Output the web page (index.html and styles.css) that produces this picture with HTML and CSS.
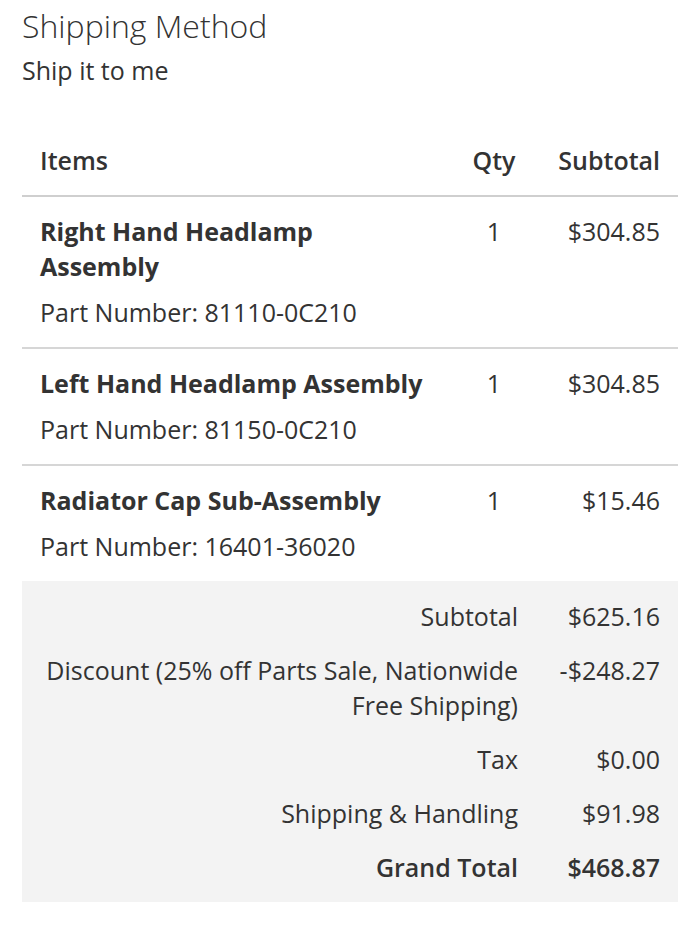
FILE: index.html
```html
<!DOCTYPE html>
<html lang="en">
<head>
<meta charset="utf-8">
<title>Shipping Method</title>
<link rel="stylesheet" href="styles.css">
</head>
<body>
<div class="page">
  <h2 class="title">Shipping Method</h2>
  <p class="method">Ship it to me</p>

  <table class="items">
    <thead>
      <tr>
        <th class="col-item">Items</th>
        <th class="col-qty">Qty</th>
        <th class="col-sub">Subtotal</th>
      </tr>
    </thead>
    <tbody>
      <tr>
        <td class="col-item">
          <div class="name">Right Hand Headlamp Assembly</div>
          <div class="part">Part Number: 81110-0C210</div>
        </td>
        <td class="col-qty">1</td>
        <td class="col-sub">$304.85</td>
      </tr>
      <tr>
        <td class="col-item">
          <div class="name">Left Hand Headlamp Assembly</div>
          <div class="part">Part Number: 81150-0C210</div>
        </td>
        <td class="col-qty">1</td>
        <td class="col-sub">$304.85</td>
      </tr>
      <tr>
        <td class="col-item">
          <div class="name">Radiator Cap Sub-Assembly</div>
          <div class="part">Part Number: 16401-36020</div>
        </td>
        <td class="col-qty">1</td>
        <td class="col-sub">$15.46</td>
      </tr>
    </tbody>
  </table>

  <div class="totals">
    <div class="t-row">
      <div class="t-label">Subtotal</div>
      <div class="t-value">$625.16</div>
    </div>
    <div class="t-row">
      <div class="t-label">Discount (25% off Parts Sale, Nationwide Free Shipping)</div>
      <div class="t-value">-$248.27</div>
    </div>
    <div class="t-row">
      <div class="t-label">Tax</div>
      <div class="t-value">$0.00</div>
    </div>
    <div class="t-row">
      <div class="t-label">Shipping &amp; Handling</div>
      <div class="t-value">$91.98</div>
    </div>
    <div class="t-row grand">
      <div class="t-label">Grand Total</div>
      <div class="t-value">$468.87</div>
    </div>
  </div>
</div>
</body>
</html>
```

FILE: styles.css
```css
* { box-sizing: border-box; }

html, body {
  margin: 0;
  padding: 0;
  background: #ffffff;
}

body {
  font-family: "Open Sans", "Liberation Sans", sans-serif;
  color: #333333;
}

.page {
  margin-left: 22px;
  width: 656px;
}

.title {
  margin: 6px 0 0;
  font-size: 32px;
  font-weight: 300;
  line-height: 40px;
  color: #333333;
}

.method {
  margin: 8px 0 0;
  font-size: 25px;
  font-weight: 400;
  line-height: 32px;
}

.items {
  width: 100%;
  margin-top: 40px;
  border-collapse: collapse;
  table-layout: fixed;
}

.items th {
  font-size: 25px;
  font-weight: 600;
  line-height: 35px;
  padding: 17px 18px 17px;
  border-bottom: 2px solid #cfcfcf;
}

.items td {
  font-size: 25px;
  line-height: 35px;
  padding: 17px 18px 17px;
  vertical-align: top;
  border-bottom: 2px solid #d6d6d6;
}

.items tbody tr:last-child td {
  border-bottom: none;
}

.col-item {
  text-align: left;
  width: 437px;
  padding-right: 33px !important;
}

.col-qty {
  text-align: center;
  width: 70px;
  padding-left: 0 !important;
  padding-right: 0 !important;
}

.col-sub {
  text-align: right;
}

.name {
  font-weight: 700;
}

.part {
  margin-top: 11px;
  font-weight: 400;
}

.totals {
  background: #f3f3f3;
  padding: 8px 0 8px;
}

.t-row {
  display: grid;
  grid-template-columns: 1fr 142px;
  font-size: 25px;
  line-height: 35px;
}

.t-label {
  text-align: right;
  padding: 9.5px 18px;
}

.t-value {
  text-align: right;
  padding: 9.5px 18px;
}

.grand {
  font-weight: 600;
}
```
